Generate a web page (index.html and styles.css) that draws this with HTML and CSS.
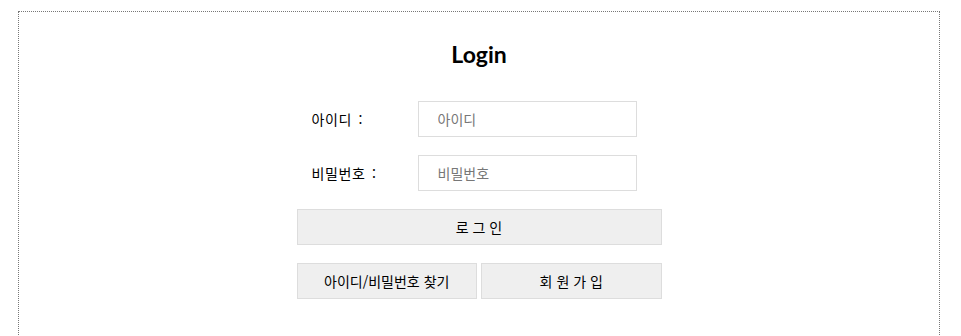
FILE: index.html
```html
<!DOCTYPE html>
<html lang="ko">
  <head>
    <meta charset="UTF-8" />
    <meta name="viewport" content="width=device-width, initial-scale=1.0" />
    <title>Login</title>
    <link rel="stylesheet" href="styles.css">
  </head>
  <body>
    <div class="login-box">
      <h1 class="login-title">Login</h1>
      <form class="login-form">
        <div class="field-row">
          <label class="field-label" for="userId">아이디 :</label>
          <input class="field-input" id="userId" type="text" placeholder="아이디">
        </div>
        <div class="field-row">
          <label class="field-label" for="userPw">비밀번호 :</label>
          <input class="field-input" id="userPw" type="password" placeholder="비밀번호">
        </div>
        <button class="btn btn-login" type="button">로 그 인</button>
        <div class="btn-row">
          <button class="btn" type="button">아이디/비밀번호 찾기</button>
          <button class="btn" type="button">회 원 가 입</button>
        </div>
      </form>
    </div>
  </body>
</html>
```

FILE: styles.css
```css
body {
  margin: 0;
  font-family: "Noto Sans CJK KR", "Noto Sans", sans-serif;
  color: #000;
  background: #fff;
  overflow: hidden;
}

.login-box {
  margin: 11px 21px 0 18px;
  height: 360px;
  border: 1px dotted #777;
  padding-top: 27px;
  box-sizing: border-box;
}

.login-title {
  margin: 0;
  text-align: center;
  font-family: Lato, "Noto Sans", sans-serif;
  font-weight: 700;
  font-size: 23px;
  line-height: 30px;
}

.login-form {
  width: 365px;
  margin: 32px auto 0;
  display: flex;
  flex-direction: column;
  gap: 18px;
}

.field-row {
  display: flex;
  align-items: center;
}

.field-label {
  width: 121px;
  padding-left: 15px;
  box-sizing: border-box;
  font-size: 14px;
  letter-spacing: 0.6px;
  word-spacing: 2px;
}

.field-input {
  width: 219px;
  height: 36px;
  box-sizing: border-box;
  border: 1px solid #ddd;
  padding: 0 0 0 19px;
  font-family: inherit;
  font-size: 14px;
  outline: none;
}

.field-input::placeholder {
  color: #777;
}

.btn {
  height: 36px;
  box-sizing: border-box;
  border: 1px solid #ddd;
  background: #efefef;
  font-family: inherit;
  font-size: 14px;
  color: #000;
  cursor: pointer;
  padding: 0;
}

.btn-row {
  display: flex;
  gap: 4px;
}

.btn-row .btn {
  flex: 1;
}
```
